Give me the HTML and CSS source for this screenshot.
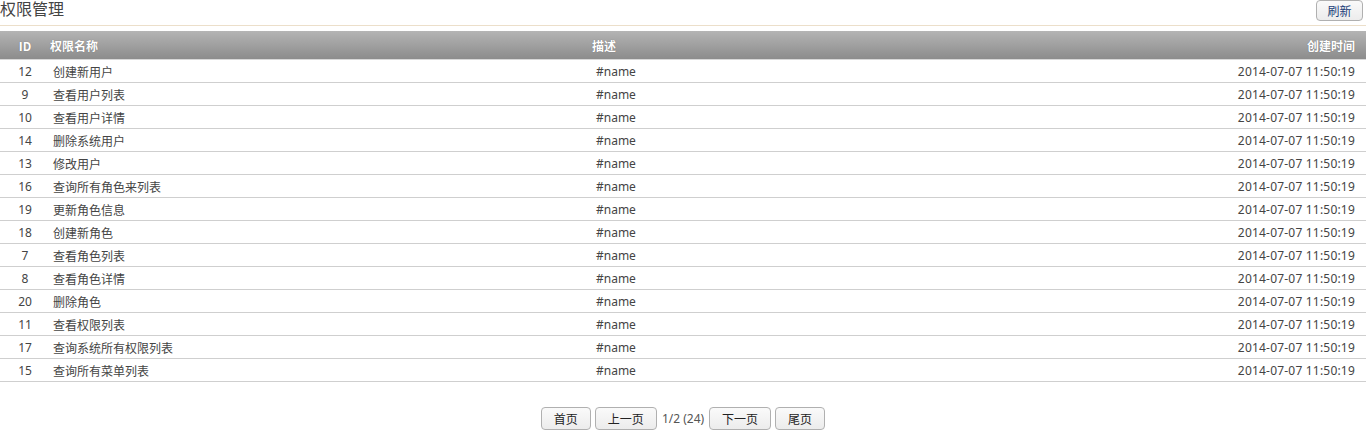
FILE: index.html
```html
<!DOCTYPE html>
<html lang="zh">
<head>
<meta charset="utf-8">
<title>权限管理</title>
<link rel="stylesheet" href="styles.css">
</head>
<body>
<div class="title-bar">
  <h1 class="title">权限管理</h1>
  <button class="btn btn-refresh">刷新</button>
</div>
<table class="grid">
  <colgroup>
    <col class="c-id"><col class="c-name"><col class="c-desc"><col class="c-time">
  </colgroup>
  <thead>
    <tr><th class="th-id">ID</th><th class="th-name">权限名称</th><th class="th-desc">描述</th><th class="th-time">创建时间</th></tr>
  </thead>
  <tbody>
    <tr><td class="td-id">12</td><td class="td-name">创建新用户</td><td class="td-desc">#name</td><td class="td-time">2014-07-07 11:50:19</td></tr>
    <tr><td class="td-id">9</td><td class="td-name">查看用户列表</td><td class="td-desc">#name</td><td class="td-time">2014-07-07 11:50:19</td></tr>
    <tr><td class="td-id">10</td><td class="td-name">查看用户详情</td><td class="td-desc">#name</td><td class="td-time">2014-07-07 11:50:19</td></tr>
    <tr><td class="td-id">14</td><td class="td-name">删除系统用户</td><td class="td-desc">#name</td><td class="td-time">2014-07-07 11:50:19</td></tr>
    <tr><td class="td-id">13</td><td class="td-name">修改用户</td><td class="td-desc">#name</td><td class="td-time">2014-07-07 11:50:19</td></tr>
    <tr><td class="td-id">16</td><td class="td-name">查询所有角色来列表</td><td class="td-desc">#name</td><td class="td-time">2014-07-07 11:50:19</td></tr>
    <tr><td class="td-id">19</td><td class="td-name">更新角色信息</td><td class="td-desc">#name</td><td class="td-time">2014-07-07 11:50:19</td></tr>
    <tr><td class="td-id">18</td><td class="td-name">创建新角色</td><td class="td-desc">#name</td><td class="td-time">2014-07-07 11:50:19</td></tr>
    <tr><td class="td-id">7</td><td class="td-name">查看角色列表</td><td class="td-desc">#name</td><td class="td-time">2014-07-07 11:50:19</td></tr>
    <tr><td class="td-id">8</td><td class="td-name">查看角色详情</td><td class="td-desc">#name</td><td class="td-time">2014-07-07 11:50:19</td></tr>
    <tr><td class="td-id">20</td><td class="td-name">删除角色</td><td class="td-desc">#name</td><td class="td-time">2014-07-07 11:50:19</td></tr>
    <tr><td class="td-id">11</td><td class="td-name">查看权限列表</td><td class="td-desc">#name</td><td class="td-time">2014-07-07 11:50:19</td></tr>
    <tr><td class="td-id">17</td><td class="td-name">查询系统所有权限列表</td><td class="td-desc">#name</td><td class="td-time">2014-07-07 11:50:19</td></tr>
    <tr><td class="td-id">15</td><td class="td-name">查询所有菜单列表</td><td class="td-desc">#name</td><td class="td-time">2014-07-07 11:50:19</td></tr>
  </tbody>
</table>
<div class="pager">
  <button class="btn btn-page btn-short">首页</button>
  <button class="btn btn-page btn-long">上一页</button>
  <span class="pager-info">1/2 (24)</span>
  <button class="btn btn-page btn-long">下一页</button>
  <button class="btn btn-page btn-short">尾页</button>
</div>
</body>
</html>
```
FILE: styles.css
```css
html, body {
  margin: 0;
  padding: 0;
  background: #fff;
}
body {
  font-family: "Noto Sans", "Noto Sans CJK SC", sans-serif;
  font-size: 12px;
  color: #444;
}
.title-bar {
  display: flex;
  justify-content: space-between;
  align-items: flex-start;
  height: 25px;
  border-bottom: 1px solid #ecdfca;
  margin-bottom: 5px;
}
.title {
  margin: 0;
  font-size: 16px;
  font-weight: normal;
  line-height: 16px;
  color: #444;
  font-family: "Noto Sans CJK SC", sans-serif;
}
.btn {
  font-family: "Noto Sans CJK SC", sans-serif;
  font-size: 12px;
  color: #222;
  background: linear-gradient(#fafafa, #ececec);
  border: 1px solid #b0b0b0;
  border-radius: 4px;
  padding: 0;
  line-height: 18px;
  cursor: pointer;
}
.btn-refresh {
  width: 47px;
  height: 21px;
  margin-right: 3px;
  color: #1a3d78;
}
.grid {
  width: 100%;
  border-collapse: collapse;
  table-layout: fixed;
}
.c-id { width: 50px; }
.c-name { width: 542px; }
.c-time { width: 300px; }
.grid th {
  height: 28px;
  padding: 0;
  color: #fff;
  font-weight: bold;
  font-size: 12px;
  font-family: "Noto Sans CJK SC", sans-serif;
  background: linear-gradient(#b4b4b4, #8c8c8c);
  border-bottom: 1px solid #d8d8d8;
  text-shadow: 0 0 1px rgba(0,0,0,0.35);
}
.th-id { text-align: center; }
.th-name, .th-desc { text-align: left; }
.th-time { text-align: right; padding-right: 11px !important; }
.grid td {
  height: 22px;
  padding: 1px 0 0 0;
  border-bottom: 1px solid #cfcfcf;
  white-space: nowrap;
  line-height: 21px;
  box-sizing: border-box;
}
.td-id { text-align: center; }
.td-name { padding-left: 3px !important; font-family: "Noto Sans CJK SC", sans-serif; }
.td-desc { padding-left: 4px !important; }
.td-time { text-align: right; padding-right: 11px !important; letter-spacing: 0.2px; }
.pager {
  display: flex;
  justify-content: center;
  align-items: center;
  gap: 4px;
  margin-top: 25px;
}
.btn-page {
  height: 23px;
}
.btn-short { width: 50px; }
.btn-long { width: 62px; }
.pager-info {
  color: #555;
  font-size: 12px;
  margin: 0 1px;
}
```
